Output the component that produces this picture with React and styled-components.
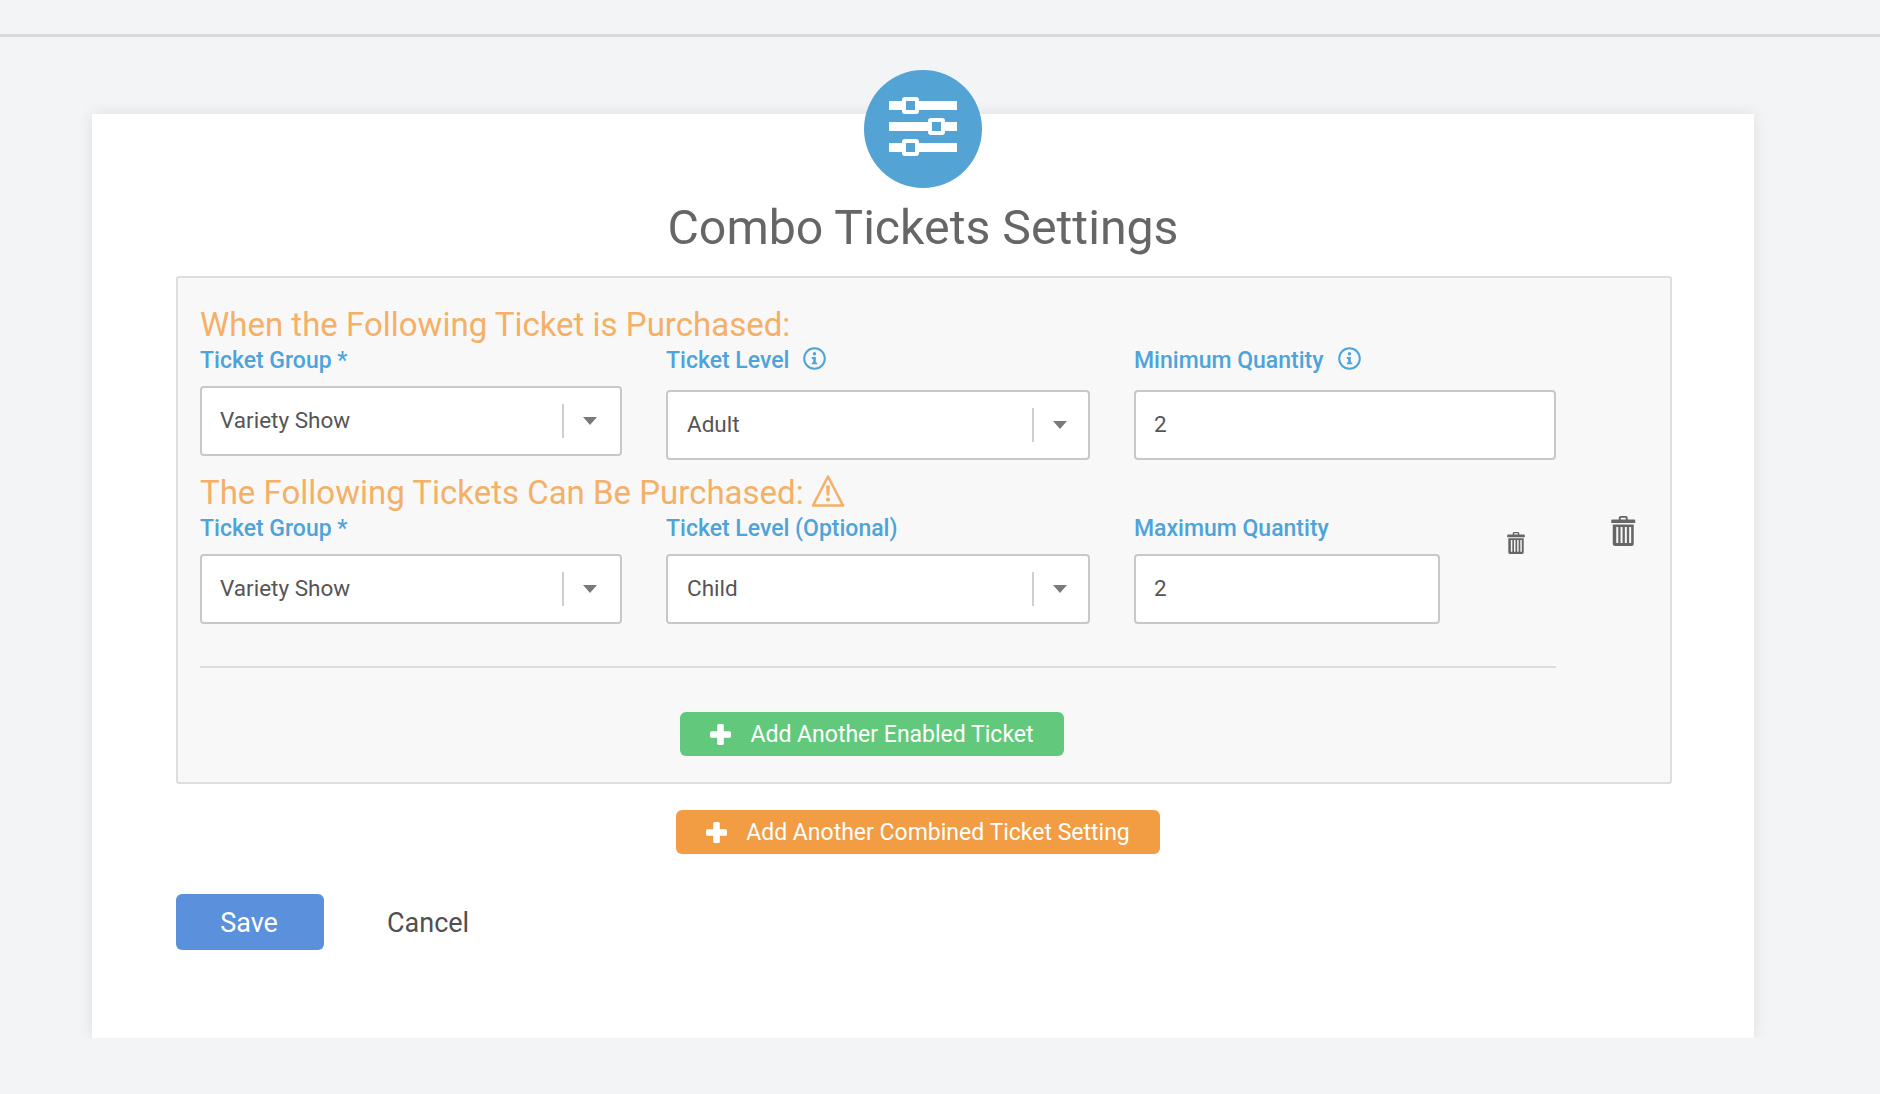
import React from "react";
import styled, { createGlobalStyle } from "styled-components";

const GlobalStyle = createGlobalStyle`
  * {
    box-sizing: border-box;
  }
  html, body {
    margin: 0;
    background: #f3f4f6;
    font-family: Roboto, "Liberation Sans", sans-serif;
  }
`;

const TopBar = styled.header`
  height: 37px;
  border-bottom: 3px solid #d9dadc;
`;

const Card = styled.main`
  display: flow-root;
  width: 1662px;
  margin: 77px 0 0 92px;
  padding: 0 82px 88px 84px;
  background: #fff;
  box-shadow: 0 0 14px rgba(0, 0, 0, 0.09);
`;

const Badge = styled.div`
  width: 118px;
  height: 118px;
  margin: -44px auto 0;
  position: relative;
  left: -1px;
  border-radius: 50%;
  background: #53a3d4;
  svg {
    display: block;
  }
`;

const Title = styled.h1`
  margin: 12px 0 20px;
  font-size: 48.25px;
  line-height: 56px;
  font-weight: 400;
  color: #666;
  text-align: center;
  transform: translateX(-1px);
`;

const Panel = styled.section`
  padding: 26px 0 26px 22px;
  background: #f8f8f8;
  border: 2px solid #dedede;
  border-radius: 3px;
`;

const Heading = styled.h2`
  display: flex;
  align-items: center;
  gap: 7px;
  height: 40px;
  margin: ${(p) => p.$top || 0}px 0 0;
  padding-top: 2px;
  font-size: 33px;
  line-height: 40px;
  font-weight: 400;
  color: #f4b066;
  svg {
    position: relative;
    top: -2px;
  }
`;

const Row = styled.div`
  display: grid;
  grid-template-columns: 422px 424px 422px auto;
  column-gap: 44px;
  margin-top: 3px;
`;

const Label = styled.div`
  display: flex;
  align-items: center;
  gap: 14px;
  height: 26px;
  margin-bottom: ${(p) => (p.$tall ? 17 : 13)}px;
  padding-top: 2px;
  font-size: 23px;
  line-height: 26px;
  font-weight: 500;
  color: #4ea3d9;
  svg {
    position: relative;
    top: -3px;
  }
`;

const Select = styled.div`
  display: flex;
  align-items: center;
  height: 70px;
  padding: 0 ${(p) => (p.$tight ? 21.5 : 23.5)}px 0 ${(p) => (p.$tight ? 19 : 18)}px;
  background: #fff;
  border: 2px solid #c8c8c8;
  border-radius: 4px;
  font-size: 22.5px;
  color: #555;
`;

const SelectText = styled.span`
  flex: 1;
  position: relative;
  top: -1px;
`;

const Divider = styled.span`
  width: 2px;
  height: 34px;
  margin-right: 19px;
  background: #cfcfcf;
`;

const Caret = styled.span`
  width: 0;
  height: 0;
  margin-top: -1px;
  border-left: 7.5px solid transparent;
  border-right: 7.5px solid transparent;
  border-top: 8px solid #7a7a7a;
`;

const Input = styled.input`
  display: block;
  width: ${(p) => p.$width}px;
  height: 70px;
  padding: 0 18px 2px;
  background: #fff;
  border: 2px solid #c8c8c8;
  border-radius: 4px;
  outline: none;
  font-family: inherit;
  font-size: 22.5px;
  color: #555;
`;

const QuantityCell = styled.div`
  display: flex;
  align-items: flex-start;
`;

const SmallTrash = styled.div`
  margin: 17px 0 0 67px;
`;

const BigTrash = styled.div`
  margin: 1px 0 0 11px;
`;

const Separator = styled.hr`
  width: 1356px;
  height: 2px;
  margin: 42px 0 44px;
  border: 0;
  background: #dcdcdc;
`;

const AddButton = styled.button`
  display: flex;
  align-items: center;
  justify-content: center;
  gap: 19px;
  width: ${(p) => p.$width}px;
  height: 44px;
  padding: 0;
  border: 0;
  border-radius: 6px;
  background: ${(p) => p.$color};
  font-family: inherit;
  font-size: 23px;
  color: #fff;
`;

const GreenRow = styled.div`
  padding-left: 480px;
`;

const OrangeRow = styled.div`
  margin: 26px 0 40px;
  padding-left: 500px;
`;

const Actions = styled.div`
  display: flex;
  align-items: center;
  gap: 63px;
`;

const SaveButton = styled.button`
  width: 148px;
  height: 56px;
  padding: 2px 2px 0 0;
  border: 0;
  border-radius: 6px;
  background: #5b90dd;
  font-family: inherit;
  font-size: 27px;
  color: #fff;
`;

const CancelLink = styled.a`
  padding-top: 2px;
  font-size: 27px;
  color: #505050;
`;

const SlidersIcon = () => (
  <svg width="118" height="118" viewBox="0 0 118 118">
    <g fill="#fff">
      <rect x="25" y="31" width="68" height="9" />
      <rect x="25" y="52" width="68" height="9" />
      <rect x="25" y="73" width="68" height="9" />
      <rect x="38" y="27" width="17" height="17" rx="3" />
      <rect x="64" y="48" width="17" height="17" rx="3" />
      <rect x="38" y="69" width="17" height="17" rx="3" />
    </g>
    <g fill="#53a3d4">
      <rect x="42" y="31" width="9" height="9" />
      <rect x="68" y="52" width="9" height="9" />
      <rect x="42" y="73" width="9" height="9" />
    </g>
  </svg>
);

const InfoIcon = () => (
  <svg width="23" height="23" viewBox="0 0 23 23">
    <circle cx="11.5" cy="11.5" r="10.3" fill="none" stroke="#4ea3d9" strokeWidth="2" />
    <circle cx="11.5" cy="6.7" r="1.7" fill="#4ea3d9" />
    <path d="M8.8 10h4v5.4h1.4v1.9H8.8v-1.9h1.4v-3.5H8.8z" fill="#4ea3d9" />
  </svg>
);

const WarningIcon = () => (
  <svg width="34" height="34" viewBox="0 0 34 34">
    <path
      d="M17 2.5 32 31.5H2z"
      fill="none"
      stroke="#f4b066"
      strokeWidth="2.6"
      strokeLinejoin="round"
    />
    <path d="M15 11.5h4l-.7 10h-2.600z" fill="#f4b066" />
    <circle cx="17" cy="25.6" r="2.100" fill="#f4b066" />
  </svg>
);

const TrashIcon = ({ width, height }) => (
  <svg width={width} height={height} viewBox="0 0 24 30">
    <path
      fillRule="evenodd"
      fill="#666"
      d="M7.5 3.5V2a2 2 0 0 1 2-2h5a2 2 0 0 1 2 2v1.5H23a1 1 0 0 1 1 1V7H0V4.500a1 1 0 0 1 1-1zM9.500 1.800v1.700h5V1.800zM1.500 8.500h21V27.500a2.500 2.500 0 0 1-2.500 2.500H4a2.500 2.500 0 0 1-2.500-2.500zM5 11v16h2V11zM9.300 11v16h2V11zM13.600 11v16h2V11zM17.900 11v16h2V11z"
    />
  </svg>
);

const PlusIcon = () => (
  <svg width="21" height="21" viewBox="0 0 21 21">
    <path
      d="M7.200 1.500A1.500 1.500 0 0 1 8.700 0h3.600a1.500 1.500 0 0 1 1.500 1.500v5.700h5.700A1.500 1.500 0 0 1 21 8.700v3.600a1.500 1.500 0 0 1-1.500 1.500h-5.700v5.700a1.500 1.500 0 0 1-1.500 1.500H8.700a1.500 1.500 0 0 1-1.500-1.500v-5.700H1.500A1.500 1.500 0 0 1 0 12.300V8.700a1.500 1.500 0 0 1 1.500-1.500h5.700z"
      fill="#fff"
    />
  </svg>
);

const SelectBox = ({ value, tight }) => (
  <Select $tight={tight}>
    <SelectText>{value}</SelectText>
    <Divider />
    <Caret />
  </Select>
);

const App = () => {
  return (
    <>
      <GlobalStyle />
      <TopBar />
      <Card>
        <Badge>
          <SlidersIcon />
        </Badge>
        <Title>Combo Tickets Settings</Title>
        <Panel>
          <Heading>When the Following Ticket is Purchased:</Heading>
          <Row>
            <div>
              <Label>Ticket Group *</Label>
              <SelectBox value="Variety Show" />
            </div>
            <div>
              <Label $tall>
                Ticket Level <InfoIcon />
              </Label>
              <SelectBox value="Adult" tight />
            </div>
            <div>
              <Label $tall>
                Minimum Quantity <InfoIcon />
              </Label>
              <Input $width={422} value="2" readOnly />
            </div>
          </Row>
          <Heading $top={12}>
            The Following Tickets Can Be Purchased: <WarningIcon />
          </Heading>
          <Row>
            <div>
              <Label>Ticket Group *</Label>
              <SelectBox value="Variety Show" />
            </div>
            <div>
              <Label>Ticket Level (Optional)</Label>
              <SelectBox value="Child" tight />
            </div>
            <QuantityCell>
              <div>
                <Label>Maximum Quantity</Label>
                <Input $width={306} value="2" readOnly />
              </div>
              <SmallTrash>
                <TrashIcon width={18} height={22} />
              </SmallTrash>
            </QuantityCell>
            <BigTrash>
              <TrashIcon width={24.5} height={30} />
            </BigTrash>
          </Row>
          <Separator />
          <GreenRow>
            <AddButton $width={384} $color="#62c97c">
              <PlusIcon />
              Add Another Enabled Ticket
            </AddButton>
          </GreenRow>
        </Panel>
        <OrangeRow>
          <AddButton $width={484} $color="#f29c44">
            <PlusIcon />
            Add Another Combined Ticket Setting
          </AddButton>
        </OrangeRow>
        <Actions>
          <SaveButton>Save</SaveButton>
          <CancelLink>Cancel</CancelLink>
        </Actions>
      </Card>
    </>
  );
};

export default App;
